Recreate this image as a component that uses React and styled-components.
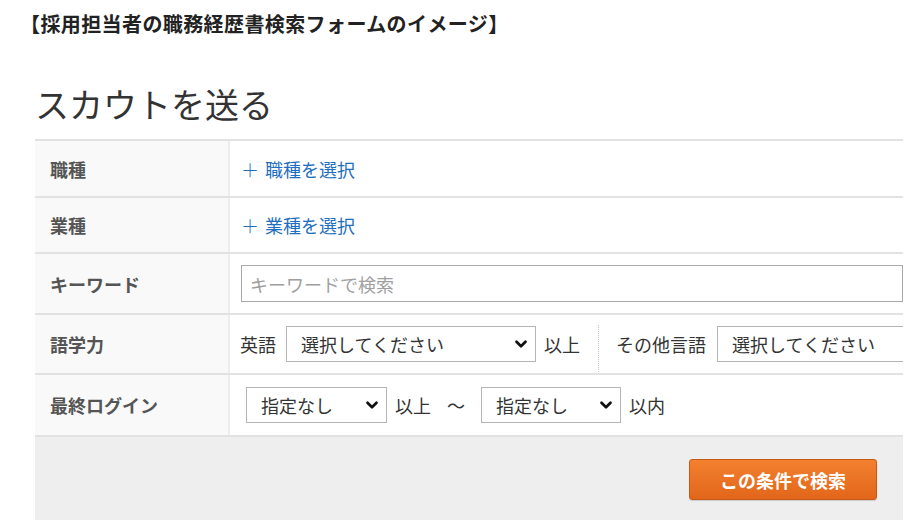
import React from "react";
import styled, { createGlobalStyle } from "styled-components";
import { ChevronDown } from "lucide-react";

const GlobalStyle = createGlobalStyle`
  body {
    margin: 0;
    background: #ffffff;
    font-family: "Noto Sans CJK JP", "Noto Sans", sans-serif;
    color: #333;
  }
`;

const Page = styled.div`
  width: 920px;
  height: 520px;
  overflow: hidden;
  position: relative;
`;

const Caption = styled.div`
  padding: 10px 0 0 20px;
  font-size: 20px;
  line-height: 28px;
  font-weight: bold;
  color: #222;
  letter-spacing: 0.4px;
`;

const Panel = styled.div`
  margin: 42px 0 0 35px;
  width: 868px;
`;

const Title = styled.h1`
  margin: 0;
  font-size: 34px;
  line-height: 48px;
  font-weight: normal;
  color: #333;
`;

const Table = styled.div`
  margin-top: 11px;
  border-top: 2px solid #e2e2e2;
  overflow: hidden;
`;

const Row = styled.div`
  display: grid;
  grid-template-columns: 195px 1fr;
  height: ${(p) => p.$h}px;
  border-bottom: 2px solid #e2e2e2;
`;

const Label = styled.div`
  display: flex;
  align-items: center;
  padding-left: 15px;
  background: #f9f9f9;
  border-right: 2px solid #ededed;
  font-size: 18px;
  font-weight: bold;
  color: #555;
`;

const Cell = styled.div`
  display: flex;
  align-items: center;
  padding-left: ${(p) => p.$pad ?? 11}px;
  font-size: 18px;
  color: #333;
  white-space: nowrap;
  overflow: hidden;
`;

const AddLink = styled.a`
  display: flex;
  align-items: center;
  gap: 6px;
  color: #1f6fc0;
  text-decoration: none;
  font-size: 18px;
  cursor: pointer;
`;

const Plus = styled.span`
  font-size: 18px;
  font-weight: 300;
`;

const KeywordInput = styled.input`
  width: 700px;
  height: 37px;
  box-sizing: border-box;
  border: 1px solid #a9a9a9;
  padding: 0 8px;
  font-family: inherit;
  font-size: 18px;
  color: #333;
  &::placeholder {
    color: #a0a0a0;
  }
`;

const SelectWrap = styled.div`
  position: relative;
  flex-shrink: 0;
  width: ${(p) => p.$w}px;
  height: 36px;
  margin-left: ${(p) => p.$ml ?? 0}px;
`;

const Select = styled.select`
  appearance: none;
  width: 100%;
  height: 100%;
  box-sizing: border-box;
  border: 1px solid #b5b5b5;
  border-radius: 0;
  background: #fff;
  padding: 0 30px 0 14px;
  font-family: inherit;
  font-size: 18px;
  color: #333;
`;

const Arrow = styled(ChevronDown)`
  position: absolute;
  right: 6px;
  top: 50%;
  margin-top: -9px;
  pointer-events: none;
  color: #111;
`;

const Unit = styled.span`
  margin: 0 ${(p) => p.$mr ?? 0}px 0 ${(p) => p.$ml ?? 8}px;
`;

const Divider = styled.span`
  align-self: stretch;
  margin: 10px 17px 1px 18px;
  border-left: 1px dotted #c4c4c4;
`;

const Footer = styled.div`
  display: flex;
  justify-content: flex-end;
  background: #eeeeee;
  padding: 22px 26px 0 0;
  height: 120px;
`;

const SearchButton = styled.button`
  width: 188px;
  height: 41px;
  border: 1px solid #c55a16;
  border-radius: 3px;
  background: linear-gradient(#f2802f, #e2661a);
  color: #fff;
  font-family: inherit;
  font-size: 18px;
  font-weight: bold;
  box-shadow: 0 1px 1px rgba(0, 0, 0, 0.15);
  cursor: pointer;
`;

const Dropdown = ({ w, ml, value }) => (
  <SelectWrap $w={w} $ml={ml}>
    <Select defaultValue={value}>
      <option>{value}</option>
    </Select>
    <Arrow size={18} strokeWidth={3.6} />
  </SelectWrap>
);

export default function App() {
  return (
    <Page>
      <GlobalStyle />
      <Caption>【採用担当者の職務経歴書検索フォームのイメージ】</Caption>
      <Panel>
        <Title>スカウトを送る</Title>
        <Table>
          <Row $h={55}>
            <Label>職種</Label>
            <Cell>
              <AddLink>
                <Plus>＋</Plus>職種を選択
              </AddLink>
            </Cell>
          </Row>
          <Row $h={54}>
            <Label>業種</Label>
            <Cell>
              <AddLink>
                <Plus>＋</Plus>業種を選択
              </AddLink>
            </Cell>
          </Row>
          <Row $h={59}>
            <Label>キーワード</Label>
            <Cell>
              <KeywordInput placeholder="キーワードで検索" />
            </Cell>
          </Row>
          <Row $h={58}>
            <Label>語学力</Label>
            <Cell $pad={10}>
              英語
              <Dropdown w={250} ml={10} value="選択してください" />
              <Unit>以上</Unit>
              <Divider />
              その他言語
              <Dropdown w={250} ml={11} value="選択してください" />
            </Cell>
          </Row>
          <Row $h={60}>
            <Label>最終ログイン</Label>
            <Cell $pad={16}>
              <Dropdown w={141} value="指定なし" />
              <Unit>以上</Unit>
              <Unit $ml={16} $mr={16}>～</Unit>
              <Dropdown w={140} value="指定なし" />
              <Unit>以内</Unit>
            </Cell>
          </Row>
        </Table>
        <Footer>
          <SearchButton>この条件で検索</SearchButton>
        </Footer>
      </Panel>
    </Page>
  );
}
